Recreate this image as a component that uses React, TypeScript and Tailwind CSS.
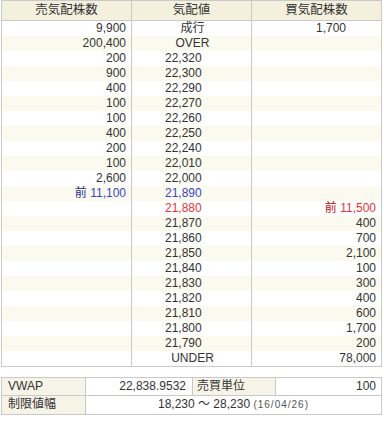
const font = { fontFamily: '"Liberation Sans", "Noto Sans CJK JP", sans-serif' };

type Row = {
  sell?: React.ReactNode;
  price: React.ReactNode;
  buy?: React.ReactNode;
  center?: boolean;
};

const blue = (s: string) => (
  <span>
    <span className="text-[#1f2a9c]">前</span> <span className="text-[#3a46c8]">{s}</span>
  </span>
);
const red = (s: string) => (
  <span>
    <span className="text-[#c80f16]">前</span> <span className="text-[#e8333a]">{s}</span>
  </span>
);

const rows: Row[] = [
  { sell: '9,900', price: '成行', buy: <span className="pr-[30px]">1,700</span>, center: true },
  { sell: '200,400', price: 'OVER', center: true },
  { sell: '200', price: '22,320' },
  { sell: '900', price: '22,300' },
  { sell: '400', price: '22,290' },
  { sell: '100', price: '22,270' },
  { sell: '100', price: '22,260' },
  { sell: '400', price: '22,250' },
  { sell: '200', price: '22,240' },
  { sell: '100', price: '22,010' },
  { sell: '2,600', price: '22,000' },
  { sell: blue('11,100'), price: <span className="text-[#3a46c8]">21,890</span> },
  { price: <span className="text-[#e8333a]">21,880</span>, buy: red('11,500') },
  { price: '21,870', buy: '400' },
  { price: '21,860', buy: '700' },
  { price: '21,850', buy: '2,100' },
  { price: '21,840', buy: '100' },
  { price: '21,830', buy: '300' },
  { price: '21,820', buy: '400' },
  { price: '21,810', buy: '600' },
  { price: '21,800', buy: '1,700' },
  { price: '21,790', buy: '200' },
  { price: 'UNDER', buy: '78,000', center: true },
];

export default function App() {
  return (
    <div className="w-[384px] h-[424px] bg-white text-[12px] text-[#333]" style={font}>
      <div className="ml-px w-[381px] border border-[#c9c9c9]">
        <div className="flex h-[20px] items-center border-b border-[#c9c9c9] bg-[#f3f1de] text-[12.5px]">
          <div className="w-[130px] h-full border-r border-[#c9c9c9] flex items-center justify-center">売気配株数</div>
          <div className="w-[120px] h-full border-r border-[#c9c9c9] flex items-center justify-center">気配値</div>
          <div className="flex-1 h-full flex items-center justify-center">買気配株数</div>
        </div>
        {rows.map((r, i) => (
          <div key={i} className={`flex h-[15px] leading-[15px] ${i % 2 === 1 ? 'bg-[#fbfaef]' : 'bg-white'}`}>
            <div className="w-[130px] border-r border-[#c9c9c9] text-right pr-[5px]">{r.sell}</div>
            <div className={`w-[120px] border-r border-[#c9c9c9] ${r.center ? 'text-center pl-[2px]' : 'pl-[33px]'}`}>{r.price}</div>
            <div className="flex-1 text-right pr-[5px]">{r.buy}</div>
          </div>
        ))}
      </div>

      <div className="ml-px mt-[10px] w-[381px] border border-[#c9c9c9]">
        <div className="flex h-[18px] leading-[17px] border-b border-[#c9c9c9]">
          <div className="w-[84px] border-r border-[#c9c9c9] bg-[#f6f4e6] pl-[6px]">VWAP</div>
          <div className="w-[107px] border-r border-[#c9c9c9] text-right pr-[6px]">22,838.9532</div>
          <div className="w-[83px] border-r border-[#c9c9c9] bg-[#f6f4e6] pl-[4px]">売買単位</div>
          <div className="flex-1 text-right pr-[5px]">100</div>
        </div>
        <div className="flex h-[18px] leading-[17px]">
          <div className="w-[84px] border-r border-[#c9c9c9] bg-[#f6f4e6] pl-[6px]">制限値幅</div>
          <div className="flex-1 text-center">
            18,230 ～ 28,230{' '}
            <span className="text-[10px] tracking-[1px] text-[#555]">(16/04/26)</span>
          </div>
        </div>
      </div>
    </div>
  );
}
